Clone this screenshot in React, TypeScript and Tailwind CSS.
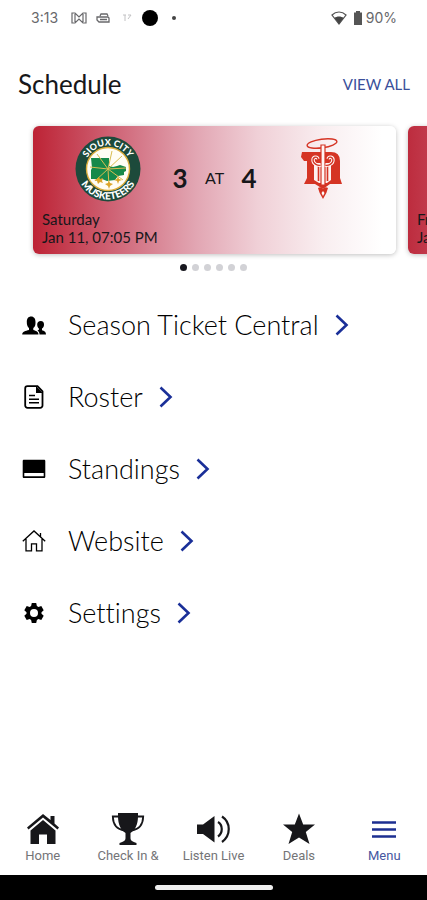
import React from "react";

const siouxCity = (
  <svg viewBox="0 0 66 66" className="size-[66px] shrink-0" role="img" aria-label="Sioux City Musketeers">
    <defs>
      <path id="sc-top" d="M9.500 33a23.500 23.500 0 0 1 47 0" />
      <path id="sc-bottom" d="M2.500 33a30.500 30.500 0 0 0 61 0" />
    </defs>
    <circle cx="33" cy="33" r="32.5" fill="#1d4a3b" />
    <circle cx="33" cy="33" r="21.5" fill="#fffdf5" stroke="#dcae3c" strokeWidth="1.4" />
    <path d="M16 22h18v8l4 1 4-1 3-1 6 2v4l-2 1v3l-6 1-3 4-8 1-5-2h-11v-9l1-2z" fill="#17894a" />
    <path d="M33 33 22 18M33 33l4-18M33 33 47 20M33 33l18-1M33 33l15 11M33 33 20 45M33 33 15 31M33 33l1 17" stroke="#d9bd52" strokeWidth="1" fill="none" />
    <path d="m24 41 1 2 3-1-1 3 1 2-3-1-2 2-1-3-3-1 3-1zM34 45l1 2 3 1-3 2-1 3-1-3-3-2 3-1zM43 40l1 3 3 1-3 1-1 3-1-3-3-1 3-1z" fill="#dda52a" />
    <text fontFamily="Lato, sans-serif" fontWeight="900" fontSize="9" fill="#fff" textAnchor="middle">
      <textPath href="#sc-top" startOffset="50%">SIOUX CITY</textPath>
    </text>
    <text fontFamily="Lato, sans-serif" fontWeight="900" fontSize="10" fill="#fff" textAnchor="middle">
      <textPath href="#sc-bottom" startOffset="50%">MUSKETEERS</textPath>
    </text>
  </svg>
);

const dubuque = (
  <svg viewBox="0 0 66 66" className="size-[66px] shrink-0" role="img" aria-label="Dubuque Fighting Saints">
    <ellipse cx="33" cy="7.500" rx="15" ry="4.300" fill="none" stroke="#d53424" strokeWidth="1.400" transform="rotate(-8 33 7.500)" />
    <path d="M13 16h29q9 0 9 9v17l2 6H41l-7 5-8-5H15l3-6V25h-3l-3-4z" fill="#d53424" />
    <path d="M25 27h17v17l-4 3h-8l-5-3z" fill="#fdf1f0" />
    <path d="M32 9h4v40h-4z" fill="#fff5f4" stroke="#d53424" strokeWidth="1.200" />
    <path d="M29.500 30v15M38.500 30v15" stroke="#d53424" strokeWidth="1.600" />
    <path d="M32 29c-3 1-8-1-8-5 0-3 4-4 5-1M36 29c3 1 8-1 8-5 0-3-4-4-5-1" stroke="#fff5f4" strokeWidth="3.400" fill="none" />
    <path d="M32 29c-3 1-8-1-8-5 0-3 4-4 5-1M36 29c3 1 8-1 8-5 0-3-4-4-5-1" stroke="#d53424" strokeWidth="1.300" fill="none" />
    <path d="M29 52q3-2 5 1 2-3 5-1-1 5-5 11-4-6-5-11z" fill="#d53424" />
    <path d="m34 55 1.500 2-1.500 3-1.500-3z" fill="#fff" />
  </svg>
);

const Icon = ({ children }: { children: React.ReactNode }) => (
  <svg viewBox="0 0 24 24" className="size-6 shrink-0" fill="currentColor" aria-hidden="true">
    {children}
  </svg>
);

const menu = [
  {
    label: "Season Ticket Central",
    icon: (
      <Icon>
        <path d="M16.500 21.500c0-3.200-2.500-3.700-5.200-4.600v-2c1.800-1 2.200-3 2.200-5.700 0-3.500-1.500-5.700-4.300-5.700C6.200 3.500 4.800 5.700 4.800 9c0 2.800.6 4.900 2.200 5.900v2C3.500 17.800.2 18.300.2 21.500z" />
        <path d="M17.500 21.500H24c0-3-1.800-3.500-4-4.300v-1.700c1.500-.8 2-2 2-3.900 0-2.200-1-3.600-3.200-3.600-2.300 0-3.600 1.400-3.600 3.600 0 1.900.5 3.100 1.700 3.900v1.300l-1.400.6c1.200.8 2 2 2 4.100z" />
      </Icon>
    ),
  },
  {
    label: "Roster",
    icon: (
      <Icon>
        <path d="M5.500 1.200h10l5 5.200v14.100a2.300 2.300 0 0 1-2.300 2.300H5.500a2.300 2.300 0 0 1-2.300-2.300v-17a2.300 2.300 0 0 1 2.300-2.300z" fill="none" stroke="currentColor" strokeWidth="1.800" />
        <path d="M14 1v7h6.800z" />
        <path d="M7 10.500h6M7 14.200h10M7 17.800h10" stroke="currentColor" strokeWidth="1.600" />
      </Icon>
    ),
  },
  {
    label: "Standings",
    icon: (
      <Icon>
        <path d="M2 2.800h20c.8 0 1.300.5 1.300 1.300v15.600c0 .8-.5 1.300-1.300 1.300H2c-.8 0-1.300-.5-1.300-1.300V4.100c0-.8.500-1.300 1.300-1.300zM2.300 16v3.300h19.400V16z" fillRule="evenodd" />
      </Icon>
    ),
  },
  {
    label: "Website",
    icon: (
      <Icon>
        <path d="M.8 12.300 12 2l11.200 10.300M4 10v11.800h5.500v-7h5v7H20V10M18.500 8V4" fill="none" stroke="currentColor" strokeWidth="1.300" />
      </Icon>
    ),
  },
  {
    label: "Settings",
    icon: (
      <Icon>
        <path
          fillRule="evenodd"
          d="M9.800 2h4.400l.7 3 1.500.9 2.900-.9 2.400 4.200-2.200 2v1.600l2.200 2-2.400 4.200-2.900-.9-1.500.9-.7 3H9.800l-.7-3-1.500-.9-2.900.9-2.400-4.200 2.200-2v-1.600l-2.200-2L4.700 5l2.900.9L9.100 5zM12 8a4 4 0 1 0 0 8 4 4 0 0 0 0-8z"
        />
      </Icon>
    ),
  },
];

const TabIcon = ({ children }: { children: React.ReactNode }) => (
  <svg viewBox="0 0 34 34" className="size-[34px]" fill="currentColor" aria-hidden="true">
    {children}
  </svg>
);

const tabs = [
  {
    label: "Home",
    icon: (
      <TabIcon>
        <path d="M17 2 1 15.500l1.500 2L17 5.500l14.500 12 1.500-2-4.500-4V4h-4v4z" />
        <path d="M17 8 4.500 18.500V32H13v-9.500h8V32h8.500V18.500z" />
      </TabIcon>
    ),
  },
  {
    label: "Check In &",
    icon: (
      <TabIcon>
        <path d="M7 1h20v3c0 9-3 14-7.500 17v5c0 3 2 3.500 6 5v2H8.500v-2c4-1.500 6-2 6-5v-5C10 18 7 13 7 4z" />
        <path d="M8 4.500H1.800C2 12 6 17.500 13.500 18.500M26 4.500h6.200C32 12 28 17.500 20.500 18.500" fill="none" stroke="currentColor" strokeWidth="1.800" />
      </TabIcon>
    ),
  },
  {
    label: "Listen Live",
    icon: (
      <TabIcon>
        <path d="M1 12.500h6L18.500 4v26.500L7 22H1z" />
        <path d="M22 10c5 3 5 11 0 14.500M26 4.500c9 6 9 19 0 25.500" fill="none" stroke="currentColor" strokeWidth="2.200" />
      </TabIcon>
    ),
  },
  {
    label: "Deals",
    icon: (
      <TabIcon>
        <path d="m17 1.500 4.200 11H33l-9.200 7.500 3.700 12L17 25.500 6.500 32l3.700-12L1 12.500h11.800z" />
      </TabIcon>
    ),
  },
  {
    label: "Menu",
    icon: (
      <TabIcon>
        <path d="M5 10.500h24M5 17.500h24M5 24.500h24" stroke="#1d2f91" strokeWidth="2.600" />
      </TabIcon>
    ),
  },
];

const gameDots = [0, 1, 2, 3, 4, 5];

export default function App() {
  return (
    <div className="flex min-h-screen flex-col overflow-hidden bg-white font-[Lato,sans-serif] text-[#17171a]">
      <header className="flex h-9 items-center justify-between pr-[30px] pl-[31px] font-[Inter,sans-serif] text-sm text-[#68686b]">
        <div className="flex items-center">
          <time className="w-10">3:13</time>
          <svg viewBox="0 0 16 12" className="h-3 w-4" fill="none" stroke="currentColor" strokeWidth="1.200" aria-hidden="true">
            <path d="M1 1h3l4 4 4-4h3v10h-3L8 7l-4 4H1zM4 2v8M12 2v8" />
          </svg>
          <svg viewBox="0 0 14 12" className="ml-[9px] h-3 w-3.5" fill="none" stroke="currentColor" strokeWidth="1.300" aria-hidden="true">
            <path d="M4 4 5 2h6l1 2M1 5h11l1 1v4H3L1 8zM4 7.500h7" />
          </svg>
          <svg viewBox="0 0 10 10" className="ml-3 size-2.5 text-[#c2c2c4]" fill="none" stroke="currentColor" aria-hidden="true">
            <path d="M1 2h3M3 2v6M6 2h3L6 6" />
          </svg>
          <span className="ml-2.5 size-4 rounded-full bg-black" />
          <span className="ml-3.5 size-1 rounded-full bg-[#444]" />
        </div>
        <div className="flex items-center">
          <svg viewBox="0 0 16 14" className="h-3.5 w-4" aria-hidden="true">
            <path d="M1 4c4-4 10-4 14 0l-7 9z" fill="none" stroke="#555" strokeWidth="1.200" />
            <path d="M3.500 7c2-2 7-2 9 0L8 13z" fill="#444" />
          </svg>
          <svg viewBox="0 0 10 14" className="ml-1.5 h-3.5 w-2.5" fill="#555" aria-hidden="true">
            <path d="M3 0h4v1.500h2V14H1V1.500h2z" />
          </svg>
          <span className="ml-[3px]">90%</span>
        </div>
      </header>

      <main className="flex-1">
        <div className="flex items-center justify-between pt-8 pr-[17px] pl-[18px]">
          <h1 className="text-[26px] leading-8">Schedule</h1>
          <a href="#schedule" className="text-[15px] leading-8 text-[#3a4f9a]">VIEW ALL</a>
        </div>

        <ul className="flex gap-3 pt-[26px] pl-[33px]">
          <li className="flex h-32 w-[calc(100%-31px)] shrink-0 flex-col justify-between rounded-md bg-[linear-gradient(90deg,#bd2335_0%,#cf6375_22%,#e2a6b3_45%,#f0d0d7_62%,#f9eef0_80%,#ffffff_96%)] px-[9px] pt-[10px] pb-2 shadow-[0_1px_5px_rgba(0,0,0,0.25)]">
            <div className="flex items-start justify-center gap-8">
              {siouxCity}
              <div className="flex w-[84px] items-center justify-between pt-[26px]">
                <span className="text-[26px] leading-8 font-bold">3</span>
                <span className="text-base">AT</span>
                <span className="text-[26px] leading-8 font-bold">4</span>
              </div>
              {dubuque}
            </div>
            <p className="text-[15px] leading-[18px]">
              Saturday
              <br />
              Jan 11, 07:05 PM
            </p>
          </li>
          <li className="flex h-32 w-[calc(100%-31px)] shrink-0 flex-col justify-end rounded-md bg-[linear-gradient(90deg,#bd2c3e_0%,#cf6375_22%,#e2a6b3_45%,#f0d0d7_62%,#f9eef0_80%,#ffffff_96%)] px-[9px] pb-2 shadow-[0_1px_5px_rgba(0,0,0,0.25)]">
            <p className="text-[15px] leading-[18px]">
              Fri
              <br />
              Jan
            </p>
          </li>
        </ul>

        <div className="flex justify-center gap-[5px] pt-2.5">
          {gameDots.map((n) => (
            <span key={n} className={n === 0 ? "size-[7px] rounded-full bg-[#17171f]" : "size-[7px] rounded-full bg-[#d2d2d6]"} />
          ))}
        </div>

        <nav aria-label="Menu" className="flex flex-col pt-[18px] pl-[22px]">
          {menu.map((item) => (
            <a key={item.label} href="#menu" className="flex h-[72px] items-center text-black">
              {item.icon}
              <span className="ml-[22px] text-[27px] leading-8 font-light [font-variant-ligatures:none]">{item.label}</span>
              <svg viewBox="0 0 14 22" className="ml-4 h-[22px] w-3.5" fill="none" stroke="#1a2f98" strokeWidth="2.600" aria-hidden="true">
                <path d="m1.500 1.500 10 9.500-10 9.500" />
              </svg>
            </a>
          ))}
        </nav>
      </main>

      <nav aria-label="Tabs" className="grid h-[63px] grid-cols-5 font-[Roboto,sans-serif]">
        {tabs.map((tab) => (
          <button key={tab.label} type="button" className="flex flex-col items-center">
            {tab.icon}
            <span className={tab.label === "Menu" ? "text-[13px] leading-5 text-[#46569f]" : "text-[13px] leading-5 text-[#747477]"}>{tab.label}</span>
          </button>
        ))}
      </nav>
      <footer className="flex h-[25px] items-center justify-center bg-black">
        <span className="h-[5px] w-[118px] rounded-full bg-[#eeeeee]" />
      </footer>
    </div>
  );
}
